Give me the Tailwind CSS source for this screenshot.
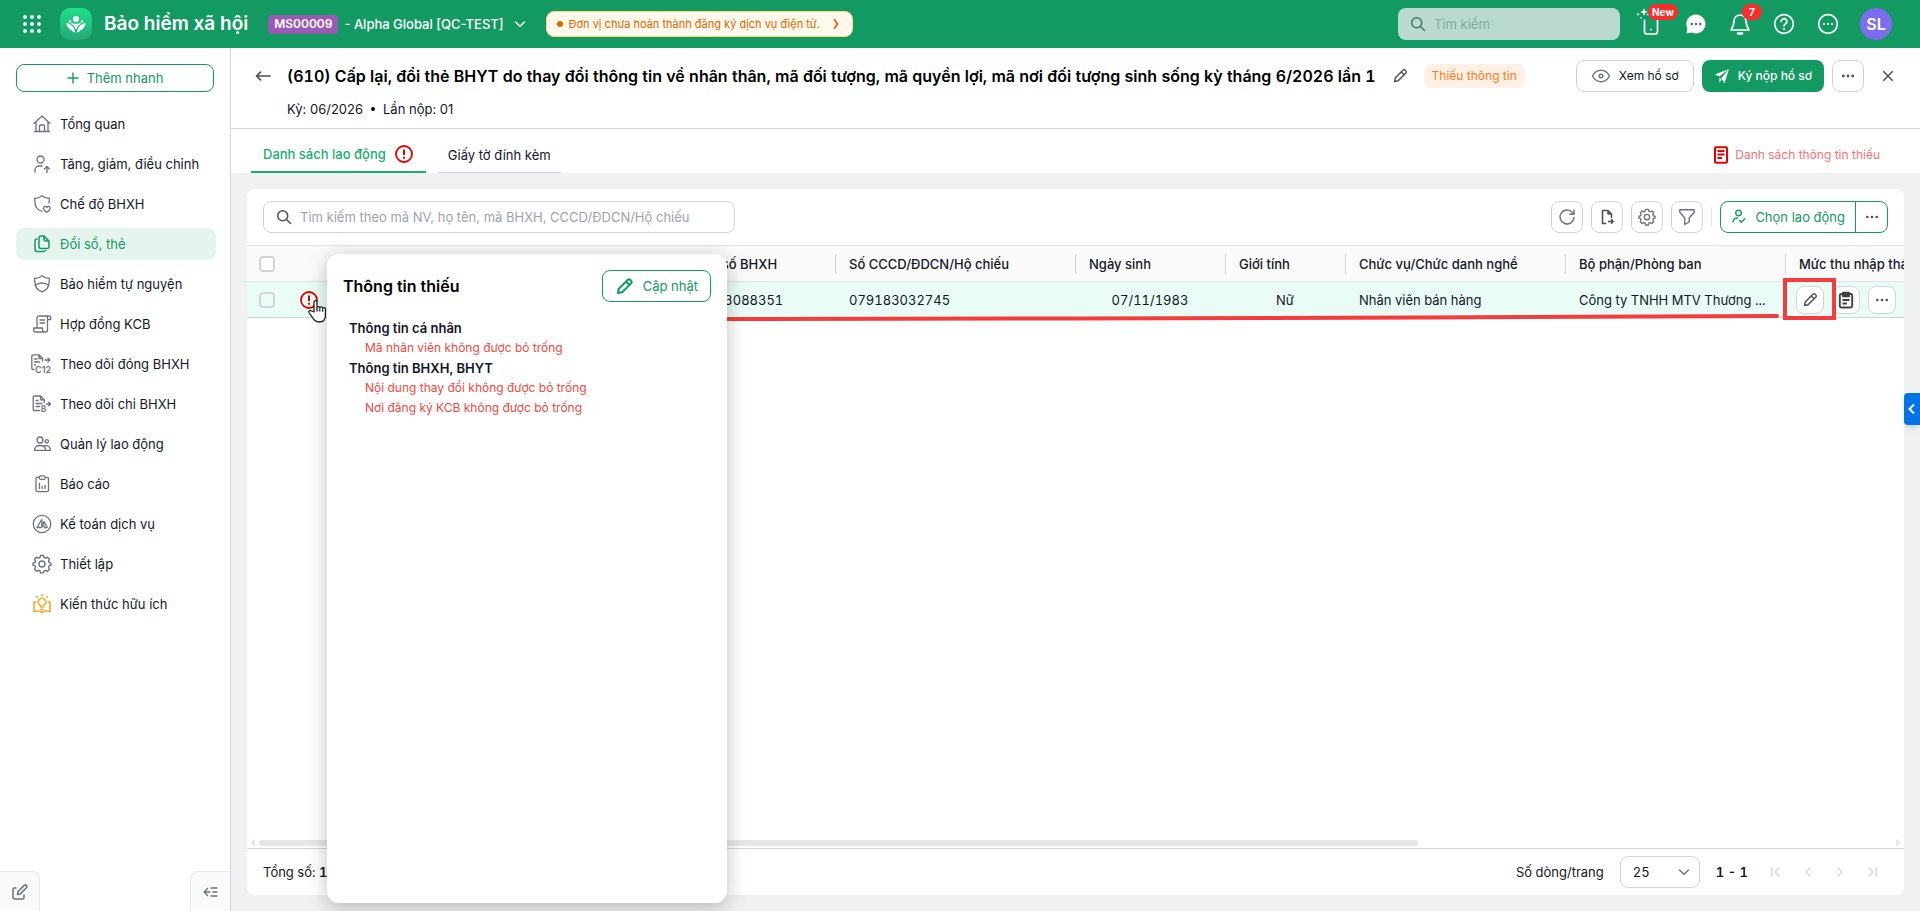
<!DOCTYPE html>
<html lang="vi">
<head>
  <meta charset="UTF-8" />
  <meta name="viewport" content="width=device-width, initial-scale=1.0"/>
  <title>Bảo hiểm xã hội</title>
  <script src="https://cdn.jsdelivr.net/npm/@tailwindcss/browser@4"></script>
</head>
<body class="font-['Inter',sans-serif] text-[13px] leading-5 text-[#111827] bg-[#f0f1f3] h-screen flex flex-col overflow-hidden">

  <!-- Top bar -->
  <header class="h-12 shrink-0 bg-[#129a62] text-white flex items-center pl-5 pr-7">
    <button type="button" aria-label="Ứng dụng" class="w-6 h-6">
      <svg class="w-6 h-6" viewBox="0 0 24 24" fill="currentColor"><circle cx="5" cy="5" r="1.900"/><circle cx="12" cy="5" r="1.900"/><circle cx="19" cy="5" r="1.900"/><circle cx="5" cy="12" r="1.900"/><circle cx="12" cy="12" r="1.900"/><circle cx="19" cy="12" r="1.900"/><circle cx="5" cy="19" r="1.900"/><circle cx="12" cy="19" r="1.900"/><circle cx="19" cy="19" r="1.900"/></svg>
    </button>
    <div class="ml-4 w-8 h-8 rounded-[10px] bg-gradient-to-b from-[#1fe08a] to-[#25a878]">
      <svg class="w-8 h-8" viewBox="0 0 32 32" fill="white"><circle cx="16" cy="11" r="3"/><circle cx="10" cy="13.500" r="1.200"/><circle cx="22" cy="13.500" r="1.200"/><path d="M6.500 15c3 .5 5 2 6.500 4 1.200 1.700 1.800 3.500 2 5.500-1.500-.3-2.800-1-3.500-2.500-1.500-.3-2.500-1-3-2.300-1.200-.8-2-2.500-2-4.700zM25.500 15c-3 .5-5 2-6.500 4-1.200 1.700-1.800 3.500-2 5.500 1.500-.3 2.800-1 3.500-2.500 1.500-.3 2.500-1 3-2.300 1.200-.8 2-2.500 2-4.700z"/><path d="M10.500 14.300c1.500 1 3.300 1.500 5.500 1.500s4-.5 5.500-1.500c-1.500 2.700-4.300 3.200-4.900 6.700h-1.200c-.6-3.500-3.400-4-4.900-6.700z"/></svg>
    </div>
    <h1 class="ml-3 text-[19px] font-semibold">Bảo hiểm xã hội</h1>
    <span class="ml-5 px-1.5 h-[19px] rounded bg-[#9b59b6] text-xs font-semibold flex items-center">MS00009</span>
    <button type="button" class="ml-1.5 flex items-center gap-2.5 text-[13px] font-medium">
      - Alpha Global [QC-TEST]
      <svg class="w-3 h-3" viewBox="0 0 12 12" fill="none" stroke="currentColor" stroke-width="1.500" stroke-linecap="round" stroke-linejoin="round"><path d="M1.500 4 6 8.300 10.500 4"/></svg>
    </button>
    <a href="#" class="ml-5 h-[26px] px-2.5 rounded-lg border border-[#fcd67f] bg-[#fff9eb] text-[#dc6803] text-[11px] flex items-center gap-1.5">
      <span class="w-1.5 h-1.5 rounded-full bg-[#dc6803]"></span>
      Đơn vị chưa hoàn thành đăng ký dịch vụ điện tử.
      <svg class="ml-1 w-3 h-3" viewBox="0 0 12 12" fill="none" stroke="currentColor" stroke-width="1.800" stroke-linecap="round" stroke-linejoin="round"><path d="M4.500 1.800 7.500 6l-3 4.200"/></svg>
    </a>
    <div class="ml-auto flex items-center">
      <label class="w-[222px] h-8 rounded-lg bg-[#bbdacf] text-[#4c7364] flex items-center gap-2 px-3 mr-5">
        <svg class="w-4 h-4 shrink-0" viewBox="0 0 16 16" fill="none" stroke="currentColor" stroke-width="1.500" stroke-linecap="round"><circle cx="6.700" cy="6.700" r="5"/><path d="m10.500 10.500 4 4"/></svg>
        <input type="search" aria-label="Tìm kiếm" placeholder="Tìm kiếm" class="w-full bg-transparent outline-none placeholder:text-[#82aa9b]"/>
      </label>
      <button type="button" aria-label="Ứng dụng di động" class="relative w-6 h-6">
        <svg class="w-6 h-6" viewBox="0 0 24 24" fill="none" stroke="currentColor" stroke-width="1.700" stroke-linecap="round"><path d="M4.500 8v11.500a2.500 2.500 0 0 0 2.500 2.500h8a2.500 2.500 0 0 0 2.500-2.500V8M8 2.500H7.500"/><circle cx="11" cy="17.500" r="1" fill="currentColor" stroke="none"/></svg>
        <svg class="absolute -left-1.5 -top-1.5 w-4 h-4" viewBox="0 0 16 16" fill="currentColor"><path d="M10 2l1 3 3 1-3 1-1 3-1-3-3-1 3-1zM4 6.500l.5 1.200 1.200.5-1.200.5L4 10l-.5-1.300-1.200-.5 1.200-.5zM7 10.500l.4 1 1 .4-1 .4-.4 1-.4-1-1-.4 1-.4z"/></svg>
        <span class="absolute left-2 -top-2 h-4 px-1 rounded-full bg-[#fb2c2c] text-[10px] leading-4 font-bold">New</span>
      </button>
      <button type="button" aria-label="Trò chuyện" class="ml-5 w-6 h-6">
        <svg class="w-6 h-6" viewBox="0 0 24 24"><path d="M12 2.500a9.500 9.500 0 1 1-4.300 18L2.500 21.500l.9-5A9.500 9.500 0 0 1 12 2.500z" fill="#fff"/><circle cx="7.800" cy="12" r="1.200" fill="#4353e8"/><circle cx="12" cy="12" r="1.200" fill="#4353e8"/><circle cx="16.200" cy="12" r="1.200" fill="#4353e8"/></svg>
      </button>
      <button type="button" aria-label="Thông báo" class="relative ml-5 w-6 h-6">
        <svg class="w-6 h-6" viewBox="0 0 24 24" fill="none" stroke="currentColor" stroke-width="1.700" stroke-linejoin="round"><path d="M12 3a6 6 0 0 0-6 6c0 4.500-1.500 7-3 9h18c-1.500-2-3-4.500-3-9a6 6 0 0 0-6-6z"/><path d="M10 21.500h4" stroke-width="2.500" stroke-linecap="round"/></svg>
        <span class="absolute left-3.5 -top-2 w-5 h-4 rounded-full bg-[#fb2c2c] text-[11px] leading-4 font-semibold text-center">7</span>
      </button>
      <button type="button" aria-label="Trợ giúp" class="ml-5 w-6 h-6">
        <svg class="w-6 h-6" viewBox="0 0 24 24" fill="none" stroke="currentColor" stroke-width="1.700" stroke-linecap="round"><circle cx="12" cy="12" r="9.300"/><path d="M9.200 9.500a2.800 2.800 0 1 1 4.200 2.400c-.9.500-1.400 1-1.400 2.100"/><circle cx="12" cy="17" r=".6" fill="currentColor" stroke-width="1"/></svg>
      </button>
      <button type="button" aria-label="Thêm" class="ml-5 w-6 h-6">
        <svg class="w-6 h-6" viewBox="0 0 24 24" fill="none" stroke="currentColor" stroke-width="1.700"><circle cx="12" cy="12" r="9.300"/><g fill="currentColor" stroke="none"><circle cx="8" cy="12" r="1.100"/><circle cx="12" cy="12" r="1.100"/><circle cx="16" cy="12" r="1.100"/></g></svg>
      </button>
      <button type="button" class="ml-5 w-8 h-8 rounded-full bg-[#7b6cf0] text-base font-semibold">SL</button>
    </div>
  </header>

  <div class="flex-1 min-h-0 flex">
    <!-- Sidebar -->
    <aside class="w-[231px] shrink-0 bg-white border-r border-[#d1d5db] flex flex-col">
      <button type="button" class="ml-4 mt-4 w-[198px] h-7 rounded-lg border border-[#129a62] text-[#129a62] flex items-center justify-center gap-2">
        <svg class="w-3 h-3" viewBox="0 0 12 12" stroke="currentColor" stroke-width="1.400"><path d="M6 .5v11M.5 6h11"/></svg>
        Thêm nhanh
      </button>
      <nav class="mt-4 pl-4 pr-[14px] flex flex-col gap-2">
        <a href="#" class="h-8 rounded-lg flex items-center gap-2 pl-4">
          <svg class="w-5 h-5 text-[#6b7280]" viewBox="0 0 20 20" fill="none" stroke="currentColor" stroke-width="1.300" stroke-linejoin="round" stroke-linecap="round"><path d="M2 9.500 10 2l8 7.500M4 8v8.500M16 8v8.500M2.500 17.500h15M7.500 17v-5a1 1 0 0 1 1-1h3a1 1 0 0 1 1 1v5"/></svg>
          Tổng quan
        </a>
        <a href="#" class="h-8 rounded-lg flex items-center gap-2 pl-4">
          <svg class="w-5 h-5 text-[#6b7280]" viewBox="0 0 20 20" fill="none" stroke="currentColor" stroke-width="1.300" stroke-linejoin="round" stroke-linecap="round"><circle cx="8.500" cy="5.500" r="3.500"/><path d="M3 18v-2a4 4 0 0 1 4-4h3M15 18.500v-6M12.500 15l2.500-2.500 2.500 2.500"/></svg>
          Tăng, giảm, điều chỉnh
        </a>
        <a href="#" class="h-8 rounded-lg flex items-center gap-2 pl-4">
          <svg class="w-5 h-5 text-[#6b7280]" viewBox="0 0 20 20" fill="none" stroke="currentColor" stroke-width="1.300" stroke-linejoin="round" stroke-linecap="round"><path d="M10 17.500c-4-1.500-7-4.300-7-9L2.500 4.500C5.500 4.500 8 3.500 10 1.800c2 1.700 4.500 2.700 7.500 2.700L17 9"/><path d="M14.800 18.300c-2-1.200-3.300-2.300-3.300-3.900a1.600 1.600 0 0 1 3.300-.7 1.600 1.600 0 0 1 3.300.7c0 1.600-1.300 2.700-3.300 3.900z"/></svg>
          Chế độ BHXH
        </a>
        <a href="#" class="h-8 rounded-lg flex items-center gap-2 pl-4 bg-[#e6f4ee] text-[#129a62]">
          <svg class="w-5 h-5" viewBox="0 0 20 20" fill="none" stroke="currentColor" stroke-width="1.500" stroke-linejoin="round" stroke-linecap="round"><path d="M12 2H9a2 2 0 0 0-2 2v8.500a2 2 0 0 0 2 2h6a2 2 0 0 0 2-2V7zM12 2v3a2 2 0 0 0 2 2h3"/><path d="M5 5a2 2 0 0 0-2 2v8.500a2 2 0 0 0 2 2h6.500a2 2 0 0 0 1.800-1"/></svg>
          Đổi sổ, thẻ
        </a>
        <a href="#" class="h-8 rounded-lg flex items-center gap-2 pl-4">
          <svg class="w-5 h-5 text-[#6b7280]" viewBox="0 0 20 20" fill="none" stroke="currentColor" stroke-width="1.300" stroke-linejoin="round" stroke-linecap="round"><path d="M10 17.800c-4-1.500-7-4.300-7-9L2.500 4.500C5.500 4.500 8 3.500 10 1.800c2 1.700 4.500 2.700 7.500 2.700L17 8.800c0 4.700-3 7.500-7 9zM3.200 11.500C5 9.800 7.500 9 10 9s5 .8 6.800 2.500"/></svg>
          Bảo hiểm tự nguyện
        </a>
        <a href="#" class="h-8 rounded-lg flex items-center gap-2 pl-4">
          <svg class="w-5 h-5 text-[#6b7280]" viewBox="0 0 20 20" fill="none" stroke="currentColor" stroke-width="1.300" stroke-linejoin="round" stroke-linecap="round"><path d="M5 14V4a2 2 0 0 1 2-2h10a1.700 1.700 0 0 1 1.700 1.700V5.500H15.500M7 2h7a1.500 1.500 0 0 1 1.500 1.500V16a2 2 0 0 1-2 2h-10A1.800 1.800 0 0 1 1.700 16.200V14H10.500v2.200a2 2 0 0 0 2.500 1.700M8 6h4.500M8 9h4.500"/></svg>
          Hợp đồng KCB
        </a>
        <a href="#" class="h-8 rounded-lg flex items-center gap-2 pl-4">
          <svg class="w-5 h-5 text-[#6b7280] overflow-visible" viewBox="0 0 20 20" fill="none" stroke="currentColor" stroke-width="1.300" stroke-linejoin="round" stroke-linecap="round"><path d="M2 15.500H1a1.200 1.200 0 0 1-1.200-1.200V2A1.200 1.200 0 0 1 1 .8h6L10.500 4.500V7M7 .8v3.700h3.500M2.500 5H5M2.500 8h5M2.500 11H3.500M13 6h4.500M16 4.200 17.800 6 16 7.800"/><text x="3" y="19" font-size="9" font-weight="600" fill="currentColor" stroke="none">C12</text></svg>
          Theo dõi đóng BHXH
        </a>
        <a href="#" class="h-8 rounded-lg flex items-center gap-2 pl-4">
          <svg class="w-5 h-5 text-[#6b7280] overflow-visible" viewBox="0 0 20 20" fill="none" stroke="currentColor" stroke-width="1.300" stroke-linejoin="round" stroke-linecap="round"><path d="M7.500 16.500H2.500A1.200 1.200 0 0 1 1.200 15.300V3.200A1.200 1.200 0 0 1 2.500 2h6L12.200 5.800V8.500M8.500 2v3.800h3.700M4 6.500h2M4 9.500h6M4 12.500h3.500M14.500 10H18.500M16.800 8.200 18.600 10l-1.800 1.800"/><text x="8.500" y="18" font-size="9" font-weight="600" fill="currentColor" stroke="none">8</text></svg>
          Theo dõi chi BHXH
        </a>
        <a href="#" class="h-8 rounded-lg flex items-center gap-2 pl-4">
          <svg class="w-5 h-5 text-[#6b7280]" viewBox="0 0 20 20" fill="none" stroke="currentColor" stroke-width="1.300" stroke-linejoin="round" stroke-linecap="round"><circle cx="8" cy="6" r="3"/><circle cx="14.800" cy="7.300" r="1.700"/><path d="M2.500 16.300c0-3 2-4.800 5.500-4.800s5.500 1.800 5.500 4.800zM12.500 11.700c3.500-.5 6 1.300 6 4.600h-5"/></svg>
          Quản lý lao động
        </a>
        <a href="#" class="h-8 rounded-lg flex items-center gap-2 pl-4">
          <svg class="w-5 h-5 text-[#6b7280]" viewBox="0 0 20 20" fill="none" stroke="currentColor" stroke-width="1.300" stroke-linejoin="round" stroke-linecap="round"><path d="M7 3.300H5.500A1.500 1.500 0 0 0 4 4.800v11.400a1.500 1.500 0 0 0 1.500 1.500h9.500a1.500 1.500 0 0 0 1.500-1.500V4.800A1.500 1.500 0 0 0 15 3.300h-1.500"/><rect x="7.200" y="1.800" width="6" height="3.500" rx="1.500"/><path d="M7.500 9.500v5M10.200 12.500v2M13 11.500v3"/></svg>
          Báo cáo
        </a>
        <a href="#" class="h-8 rounded-lg flex items-center gap-2 pl-4">
          <svg class="w-5 h-5 text-[#6b7280]" viewBox="0 0 20 20" fill="none" stroke="currentColor" stroke-width="1.300" stroke-linejoin="round" stroke-linecap="round"><circle cx="10" cy="10" r="8.700"/><path d="M9.800 5.500 5 13.500h3.500M9.800 5.500v8M9.800 13.500 12 7.500l3.200 6-2.200.300L11 11"/></svg>
          Kế toán dịch vụ
        </a>
        <a href="#" class="h-8 rounded-lg flex items-center gap-2 pl-4">
          <svg class="w-5 h-5 text-[#6b7280]" viewBox="0 0 20 20" fill="none" stroke="currentColor" stroke-width="1.400" stroke-linejoin="round"><path d="M8.500 1.500h3l.5 2 1.500.7 2-1 2 2-1 2 .6 1.400 1.900.6v2l-1.900.6-.6 1.500 1 2-2 2-2-1-1.500.6-.5 2h-3l-.5-2-1.500-.6-2 1-2-2 1-2-.6-1.500L1 11.200v-2l1.900-.6.6-1.400-1-2 2-2 2 1L8 3.500z"/><circle cx="10" cy="10" r="3"/></svg>
          Thiết lập
        </a>
        <a href="#" class="h-8 rounded-lg flex items-center gap-2 pl-4">
          <svg class="w-5 h-5 text-[#f9a72b]" viewBox="0 0 20 20" fill="none" stroke="currentColor" stroke-width="1.600" stroke-linejoin="round" stroke-linecap="round"><path d="M4 8H2v9.500c3-1 5.500-.8 8 1 2.500-1.800 5-2 8-1V8h-2"/><path d="M8.500 13v-1.500a3.800 3.800 0 1 1 3 0V13zM8.800 15.500h2.400M10 .8v1M4.500 2.500l.7.700M15.500 2.500l-.7.700"/></svg>
          Kiến thức hữu ích
        </a>
      </nav>
      <div class="mt-auto flex justify-between text-[#6b7280]">
        <button type="button" aria-label="Góp ý" class="w-10 h-10 rounded-tr-lg border-t border-r border-[#e5e7eb] bg-[#fafafa] flex items-center justify-center">
          <svg class="w-[18px] h-[18px]" viewBox="0 0 18 18" fill="none" stroke="currentColor" stroke-width="1.500" stroke-linejoin="round" stroke-linecap="round"><path d="M5 5H3.500A1.500 1.500 0 0 0 2 6.500v8A1.500 1.500 0 0 0 3.500 16h8a1.500 1.500 0 0 0 1.500-1.500V12"/><path d="m6.500 11.500.4-2.700 6.300-6.400a1.600 1.600 0 0 1 2.300 2.300l-6.400 6.400z"/></svg>
        </button>
        <button type="button" aria-label="Thu gọn" class="w-10 h-10 rounded-tl-lg border-t border-l border-[#e5e7eb] bg-[#fafafa] flex items-center justify-center">
          <svg class="w-4 h-4" viewBox="0 0 16 16" fill="none" stroke="currentColor" stroke-width="1.400" stroke-linecap="round" stroke-linejoin="round"><path d="M1.500 8H7M4.500 4.500 1.200 8l3.300 3.500M8 4h6M10 8h4M8 12h6"/></svg>
        </button>
      </div>
    </aside>

    <main class="flex-1 min-w-0 flex flex-col">
      <!-- Page title -->
      <section class="bg-white border-b border-[#d1d5db] pt-3 pb-[9px] pl-6 pr-6">
        <div class="h-8 flex items-center">
          <button type="button" aria-label="Quay lại" class="text-[#4b4f56]">
            <svg class="w-4 h-4" viewBox="0 0 16 16" fill="none" stroke="currentColor" stroke-width="1.700" stroke-linecap="round" stroke-linejoin="round"><path d="M15 8H2M5.500 4.200 1.500 8l4 3.800"/></svg>
          </button>
          <h2 class="ml-4 text-base font-semibold text-black whitespace-nowrap tabular-nums">(610) Cấp lại, đổi thẻ BHYT do thay đổi thông tin về nhân thân, mã đối tượng, mã quyền lợi, mã nơi đối tượng sinh sống kỳ tháng 6/2026 lần 1</h2>
          <button type="button" aria-label="Sửa tên" class="ml-4 text-[#4b4f56]">
            <svg class="w-4 h-4" viewBox="0 0 16 16" fill="none" stroke="currentColor" stroke-width="1.400" stroke-linejoin="round"><path d="m2.500 13.500.7-3.600 7.600-7.600a1.700 1.700 0 0 1 2.500 0l.4.400a1.700 1.700 0 0 1 0 2.500l-7.600 7.600zM9.300 3.900l2.800 2.800"/></svg>
          </button>
          <span class="ml-4 h-6 px-2 rounded-lg bg-[#fff0e6] text-[#ff7a1a] text-xs flex items-center whitespace-nowrap">Thiếu thông tin</span>
          <div class="ml-auto flex items-center gap-2">
            <button type="button" class="h-8 px-3.5 rounded-lg border border-[#d1d5db] text-xs flex items-center gap-2 whitespace-nowrap">
              <svg class="w-5 h-5 text-[#6b7280]" viewBox="0 0 20 20" fill="none" stroke="currentColor" stroke-width="1.400"><path d="M1.500 10C3.500 6.200 6.500 4.300 10 4.300s6.500 1.900 8.500 5.700c-2 3.800-5 5.700-8.500 5.700S3.500 13.800 1.500 10z"/><circle cx="10" cy="10" r="1.800"/></svg>
              Xem hồ sơ
            </button>
            <button type="button" class="h-8 px-3 rounded-lg bg-[#129a62] text-white text-xs font-medium flex items-center gap-2 whitespace-nowrap">
              <svg class="w-4 h-4" viewBox="0 0 16 16" fill="currentColor"><path d="M15 1 .8 6.500l4.400 2zM15 1l-4.500 14.200-3.300-5z"/><path d="M5.400 9.500v5l2-2.700z"/></svg>
              Ký nộp hồ sơ
            </button>
            <button type="button" aria-label="Thêm thao tác" class="w-8 h-8 rounded-lg border border-[#d1d5db] text-[#4b4f56] flex items-center justify-center">
              <svg class="w-4 h-4" viewBox="0 0 16 16" fill="currentColor"><circle cx="3.300" cy="8" r="1.400"/><circle cx="8" cy="8" r="1.400"/><circle cx="12.700" cy="8" r="1.400"/></svg>
            </button>
            <button type="button" aria-label="Đóng" class="w-8 h-8 -mr-2 text-[#4b4f56] flex items-center justify-center">
              <svg class="w-4 h-4" viewBox="0 0 16 16" fill="none" stroke="currentColor" stroke-width="1.500"><path d="m3.300 3.300 9.400 9.400M12.700 3.300l-9.400 9.400"/></svg>
            </button>
          </div>
        </div>
        <p class="mt-[7px] ml-8 flex items-center gap-2">Kỳ: 06/2026 <span class="w-1 h-1 rounded-full bg-black"></span> Lần nộp: 01</p>
      </section>

      <!-- Tabs -->
      <div class="bg-white h-11 shrink-0 flex items-stretch pl-5 pr-10">
        <a href="#" class="px-3 pt-2 border-b-2 border-[#16b06c] text-[#16b06c] font-medium flex items-center gap-2">
          Danh sách lao động
          <svg class="w-5 h-5" viewBox="0 0 20 20" fill="none" stroke="#e60000" stroke-width="1.800"><circle cx="10" cy="10" r="8"/><path d="M10 5.500v5.500M10 12.800v2" stroke-width="2"/></svg>
        </a>
        <a href="#" class="ml-3 px-2.5 pt-2 border-b border-[#d1d5db] flex items-center">Giấy tờ đính kèm</a>
        <a href="#" class="ml-auto pt-2 text-xs text-[#f87171] flex items-center gap-1">
          <svg class="w-5 h-5" viewBox="0 0 20 20" fill="none" stroke="#e60000" stroke-width="2"><rect x="4" y="2.300" width="12" height="15.400" rx="1"/><path d="M6.500 6h7M6.500 9.500h7M6.500 13H11"/></svg>
          Danh sách thông tin thiếu
        </a>
      </div>

      <!-- Employee list -->
      <section class="relative flex-1 min-h-0 m-4 bg-white rounded-lg flex flex-col">
        <div class="h-14 shrink-0 px-4 flex items-center">
          <label class="w-[472px] h-8 px-3 rounded-lg border border-[#d1d5db] flex items-center gap-2 text-[#4b4f56]">
            <svg class="w-4 h-4 shrink-0" viewBox="0 0 16 16" fill="none" stroke="currentColor" stroke-width="1.500" stroke-linecap="round"><circle cx="6.700" cy="6.700" r="5"/><path d="m10.500 10.500 4 4"/></svg>
            <input type="search" aria-label="Tìm kiếm nhân viên" placeholder="Tìm kiếm theo mã NV, họ tên, mã BHXH, CCCD/ĐDCN/Hộ chiếu" class="w-full outline-none placeholder:text-[#9ca3af]"/>
          </label>
          <div class="ml-auto flex items-center gap-2 text-[#6b7280]">
            <button type="button" aria-label="Tải lại" class="w-8 h-8 rounded-lg border border-[#d1d5db] flex items-center justify-center">
              <svg class="w-[18px] h-[18px]" viewBox="0 0 18 18" fill="none" stroke="currentColor" stroke-width="1.400" stroke-linecap="round" stroke-linejoin="round"><path d="M16 9.500A7 7 0 1 1 14.500 4.600L16 6.300M16 2v4.300h-4.300"/></svg>
            </button>
            <button type="button" aria-label="Xuất khẩu" class="w-8 h-8 rounded-lg border border-[#d1d5db] text-[#4b4f56] flex items-center justify-center">
              <svg class="w-[18px] h-[18px]" viewBox="0 0 18 18" fill="none" stroke="currentColor" stroke-width="1.500" stroke-linejoin="round"><path d="M8 15.500H4.500V2.500h5.500L13.500 6v4M10 2.500V6h3.500M10 13.500h4.800M13 11.300l2.200 2.200-2.200 2.200"/></svg>
            </button>
            <button type="button" aria-label="Thiết lập cột" class="w-8 h-8 rounded-lg border border-[#d1d5db] flex items-center justify-center">
              <svg class="w-[18px] h-[18px]" viewBox="0 0 20 20" fill="none" stroke="currentColor" stroke-width="1.500" stroke-linejoin="round"><path d="M8.500 1.500h3l.5 2 1.500.7 2-1 2 2-1 2 .6 1.400 1.900.6v2l-1.900.6-.6 1.500 1 2-2 2-2-1-1.500.6-.5 2h-3l-.5-2-1.500-.6-2 1-2-2 1-2-.6-1.500L1 11.200v-2l1.900-.6.6-1.400-1-2 2-2 2 1L8 3.500z"/><circle cx="10" cy="10" r="3"/></svg>
            </button>
            <button type="button" aria-label="Lọc" class="w-8 h-8 rounded-lg border border-[#d1d5db] flex items-center justify-center">
              <svg class="w-[18px] h-[18px]" viewBox="0 0 18 18" fill="none" stroke="currentColor" stroke-width="1.400" stroke-linejoin="round"><path d="M1.800 1.800h14.400v2.400L11.200 10v4L6.800 16.500V10L1.800 4.200z"/></svg>
            </button>
            <span class="w-px h-5 bg-[#e5e7eb]"></span>
            <div class="h-8 rounded-lg border border-[#129a62] flex">
              <button type="button" class="px-2.5 text-[#129a62] flex items-center gap-2">
                <svg class="w-4 h-4" viewBox="0 0 16 16" fill="none" stroke="currentColor" stroke-width="1.400" stroke-linecap="round" stroke-linejoin="round"><circle cx="7.500" cy="4" r="2.800"/><path d="M2 13c.3-3 1.800-4 4.500-4M8.500 11.500l1.800 1.800 3.700-3.500"/></svg>
                Chọn lao động
              </button>
              <button type="button" aria-label="Tùy chọn khác" class="w-8 border-l border-[#129a62] text-[#4b4f56] flex items-center justify-center">
                <svg class="w-4 h-4" viewBox="0 0 16 16" fill="currentColor"><circle cx="3.300" cy="8" r="1.300"/><circle cx="8" cy="8" r="1.300"/><circle cx="12.700" cy="8" r="1.300"/></svg>
              </button>
            </div>
          </div>
        </div>

        <div class="relative flex-1 min-h-0">
          <div class="h-full overflow-hidden">
            <table class="table-fixed w-[1740px] border-collapse whitespace-nowrap tabular-nums">
              <colgroup>
                <col class="w-[98px]"/><col class="w-[170px]"/><col class="w-[170px]"/><col class="w-[150px]"/><col class="w-[240px]"/><col class="w-[150px]"/><col class="w-[120px]"/><col class="w-[220px]"/><col class="w-[220px]"/><col class="w-[202px]"/>
              </colgroup>
              <thead>
                <tr class="h-9 bg-[#fafafa] border-y border-[#e0e2e5] text-left">
                  <th class="pl-3"><input type="checkbox" aria-label="Chọn tất cả" class="block appearance-none w-4 h-4 rounded border-2 border-[#d1d5db] bg-white"/></th>
                  <th class="font-medium"><div class="border-l border-[#d1d5db] pl-[13px]">Mã nhân viên</div></th>
                  <th class="font-medium"><div class="border-l border-[#d1d5db] pl-[13px]">Họ và tên</div></th>
                  <th class="font-medium"><div class="border-l border-[#d1d5db] pl-[13px]">Mã số BHXH</div></th>
                  <th class="font-medium"><div class="border-l border-[#d1d5db] pl-[13px]">Số CCCD/ĐDCN/Hộ chiếu</div></th>
                  <th class="font-medium"><div class="border-l border-[#d1d5db] pl-[13px]">Ngày sinh</div></th>
                  <th class="font-medium"><div class="border-l border-[#d1d5db] pl-[13px]">Giới tính</div></th>
                  <th class="font-medium"><div class="border-l border-[#d1d5db] pl-[13px]">Chức vụ/Chức danh nghề</div></th>
                  <th class="font-medium"><div class="border-l border-[#d1d5db] pl-[13px]">Bộ phận/Phòng ban</div></th>
                  <th class="font-medium"><div class="border-l border-[#d1d5db] pl-[13px]">Mức thu nhập tháng</div></th>
                </tr>
              </thead>
              <tbody>
                <tr class="h-9 bg-[#e9fdf6] border-b border-[#c9d6d2]">
                  <td class="pl-3">
                    <div class="flex items-center">
                      <input type="checkbox" aria-label="Chọn dòng" class="appearance-none w-4 h-4 rounded border-2 border-[#d1d5db]"/>
                      <svg class="ml-6 w-5 h-5" viewBox="0 0 20 20" fill="none" stroke="#e60000" stroke-width="1.800"><circle cx="10" cy="10" r="8"/><path d="M10 5.500v5.500M10 12.800v2" stroke-width="2"/></svg>
                    </div>
                  </td>
                  <td></td>
                  <td></td>
                  <td class="pl-[14px]">7913088351</td>
                  <td class="pl-[14px]">079183032745</td>
                  <td class="text-center">07/11/1983</td>
                  <td class="text-center">Nữ</td>
                  <td class="pl-[14px]">Nhân viên bán hàng</td>
                  <td class="px-[14px] truncate">Công ty TNHH MTV Thương ...</td>
                  <td></td>
                </tr>
              </tbody>
            </table>
          </div>

          <!-- Row actions float over the scrolled table -->
          <div class="absolute right-2 top-[41px] flex gap-2 text-[#4b4f56]">
            <button type="button" aria-label="Sửa" class="w-7 h-7 rounded-lg border border-[#d1d5db] bg-white flex items-center justify-center">
              <svg class="w-4 h-4" viewBox="0 0 16 16" fill="none" stroke="currentColor" stroke-width="1.400" stroke-linejoin="round"><path d="m2.500 13.500.7-3.600 7.600-7.600a1.700 1.700 0 0 1 2.500 0l.4.400a1.700 1.700 0 0 1 0 2.500l-7.600 7.600zM9.300 3.900l2.800 2.800"/></svg>
            </button>
            <button type="button" aria-label="Chi tiết" class="w-7 h-7 rounded-lg border border-[#d1d5db] bg-white flex items-center justify-center">
              <svg class="w-[18px] h-[18px]" viewBox="0 0 18 18" fill="none" stroke="#3f4246" stroke-width="1.900" stroke-linejoin="round"><rect x="2.800" y="3" width="12.400" height="13.500" rx="1.500"/><path d="M6 1.800h6v3.500H6z" fill="#3f4246"/><path d="M5.500 9h7M5.500 12.500H10"/></svg>
            </button>
            <button type="button" aria-label="Khác" class="w-7 h-7 rounded-lg border border-[#d1d5db] bg-white flex items-center justify-center">
              <svg class="w-4 h-4" viewBox="0 0 16 16" fill="currentColor"><circle cx="3.300" cy="8" r="1.300"/><circle cx="8" cy="8" r="1.300"/><circle cx="12.700" cy="8" r="1.300"/></svg>
            </button>
          </div>
          <div class="absolute right-[68px] top-[33px] w-[53px] h-[42px] border-4 border-[#f53b3b]"></div>
          <svg class="absolute left-[478px] top-[68px] w-[calc(100%-603px)] h-2" viewBox="0 0 1055 8" preserveAspectRatio="none" fill="none" stroke="#f53b3b" stroke-width="4" stroke-linecap="round"><path d="M2 6 350 5.500 700 4.500 1053 3"/></svg>

          <div class="absolute inset-x-0 bottom-0 h-2.5 px-[3px] flex items-center gap-1">
            <svg class="w-[5px] h-2" viewBox="0 0 5 8" fill="#e5e7eb"><path d="M5 0v8L0 4z"/></svg>
            <div class="flex-1"><div class="w-[71%] h-1.5 rounded-full bg-[#e6e7e9]"></div></div>
            <svg class="w-[5px] h-2" viewBox="0 0 5 8" fill="#e5e7eb"><path d="M0 0v8l5-4z"/></svg>
          </div>
        </div>

        <div class="h-[47px] shrink-0 border-t border-[#d1d5db] pl-4 pr-6 flex items-center tabular-nums">
          <p>Tổng số: <b class="font-semibold">1</b></p>
          <div class="ml-auto flex items-center">
            <label for="pageSize">Số dòng/trang</label>
            <div class="relative ml-4">
              <select id="pageSize" class="appearance-none w-20 h-8 pl-3 rounded-lg border border-[#d1d5db] bg-white"><option>25</option><option>50</option><option>100</option></select>
              <svg class="absolute right-2.5 top-2.5 w-3 h-3 text-[#6b7280] pointer-events-none" viewBox="0 0 12 12" fill="none" stroke="currentColor" stroke-width="1.500" stroke-linecap="round" stroke-linejoin="round"><path d="M1.500 4 6 8.300 10.500 4"/></svg>
            </div>
            <span class="ml-4 font-semibold">1 - 1</span>
            <div class="ml-5 flex gap-4 text-[#d1d5db]">
              <button type="button" aria-label="Trang đầu"><svg class="w-4 h-4" viewBox="0 0 16 16" fill="none" stroke="currentColor" stroke-width="1.400"><path d="M4 3v10M11.500 3.500 7 8l4.500 4.500"/></svg></button>
              <button type="button" aria-label="Trang trước"><svg class="w-4 h-4" viewBox="0 0 16 16" fill="none" stroke="currentColor" stroke-width="1.400"><path d="M10.500 3.500 6 8l4.500 4.500"/></svg></button>
              <button type="button" aria-label="Trang sau"><svg class="w-4 h-4" viewBox="0 0 16 16" fill="none" stroke="currentColor" stroke-width="1.400"><path d="M5.500 3.500 10 8l-4.500 4.500"/></svg></button>
              <button type="button" aria-label="Trang cuối"><svg class="w-4 h-4" viewBox="0 0 16 16" fill="none" stroke="currentColor" stroke-width="1.400"><path d="M12 3v10M4.500 3.500 9 8l-4.500 4.500"/></svg></button>
            </div>
          </div>
        </div>

        <!-- Missing information popup -->
        <div class="absolute left-20 top-[65px] -bottom-2 w-[400px] p-4 bg-white rounded-xl shadow-[0_4px_20px_rgba(0,0,0,0.25)]">
          <div class="flex items-center justify-between">
            <h3 class="text-base font-semibold text-black">Thông tin thiếu</h3>
            <button type="button" class="h-8 px-3 rounded-lg border border-[#129a62] text-[#129a62] flex items-center gap-2">
              <svg class="w-5 h-5" viewBox="0 0 20 20" fill="none" stroke="currentColor" stroke-width="2" stroke-linejoin="round"><path d="m3 17 .8-4.200L12.600 4a2 2 0 0 1 2.800 0l.6.600a2 2 0 0 1 0 2.800l-8.800 8.800zM11 5.500l3.500 3.500"/></svg>
              Cập nhật
            </button>
          </div>
          <div class="mt-4 pl-1.5">
            <h4 class="font-semibold">Thông tin cá nhân</h4>
            <p class="pl-4 text-xs leading-5 text-[#f0483e]">Mã nhân viên không được bỏ trống</p>
            <h4 class="font-semibold">Thông tin BHXH, BHYT</h4>
            <p class="pl-4 text-xs leading-5 text-[#f0483e]">Nội dung thay đổi không được bỏ trống</p>
            <p class="pl-4 text-xs leading-5 text-[#f0483e]">Nơi đăng ký KCB không được bỏ trống</p>
          </div>
        </div>

        <svg class="absolute left-[60px] top-[110px] w-[22px] h-6" viewBox="0 0 22 24" fill="#fff" stroke="#222" stroke-width="1.300" stroke-linejoin="round"><path d="M7 13V3.200a1.500 1.500 0 0 1 3 0V9a1.400 1.400 0 0 1 2.800 0 1.400 1.400 0 0 1 2.800.7 1.400 1.400 0 0 1 2.800.8V16c0 4-2 7-6 7-4.500 0-5.500-2.500-10.400-9.500-.8-1.500 1-2.600 2.400-1.500z"/><path d="M10 9v3.500M12.800 9.500v3M15.600 10.300v2.500" fill="none"/></svg>
      </section>
    </main>
  </div>

  <button type="button" aria-label="Mở bảng" class="absolute right-0 top-[393px] w-4 h-8 rounded-l bg-[#0073e6] text-white shadow-md flex items-center justify-center">
    <svg class="w-3 h-3" viewBox="0 0 12 12" fill="none" stroke="currentColor" stroke-width="2"><path d="M8 1.500 3.500 6 8 10.500"/></svg>
  </button>

</body>
</html>
